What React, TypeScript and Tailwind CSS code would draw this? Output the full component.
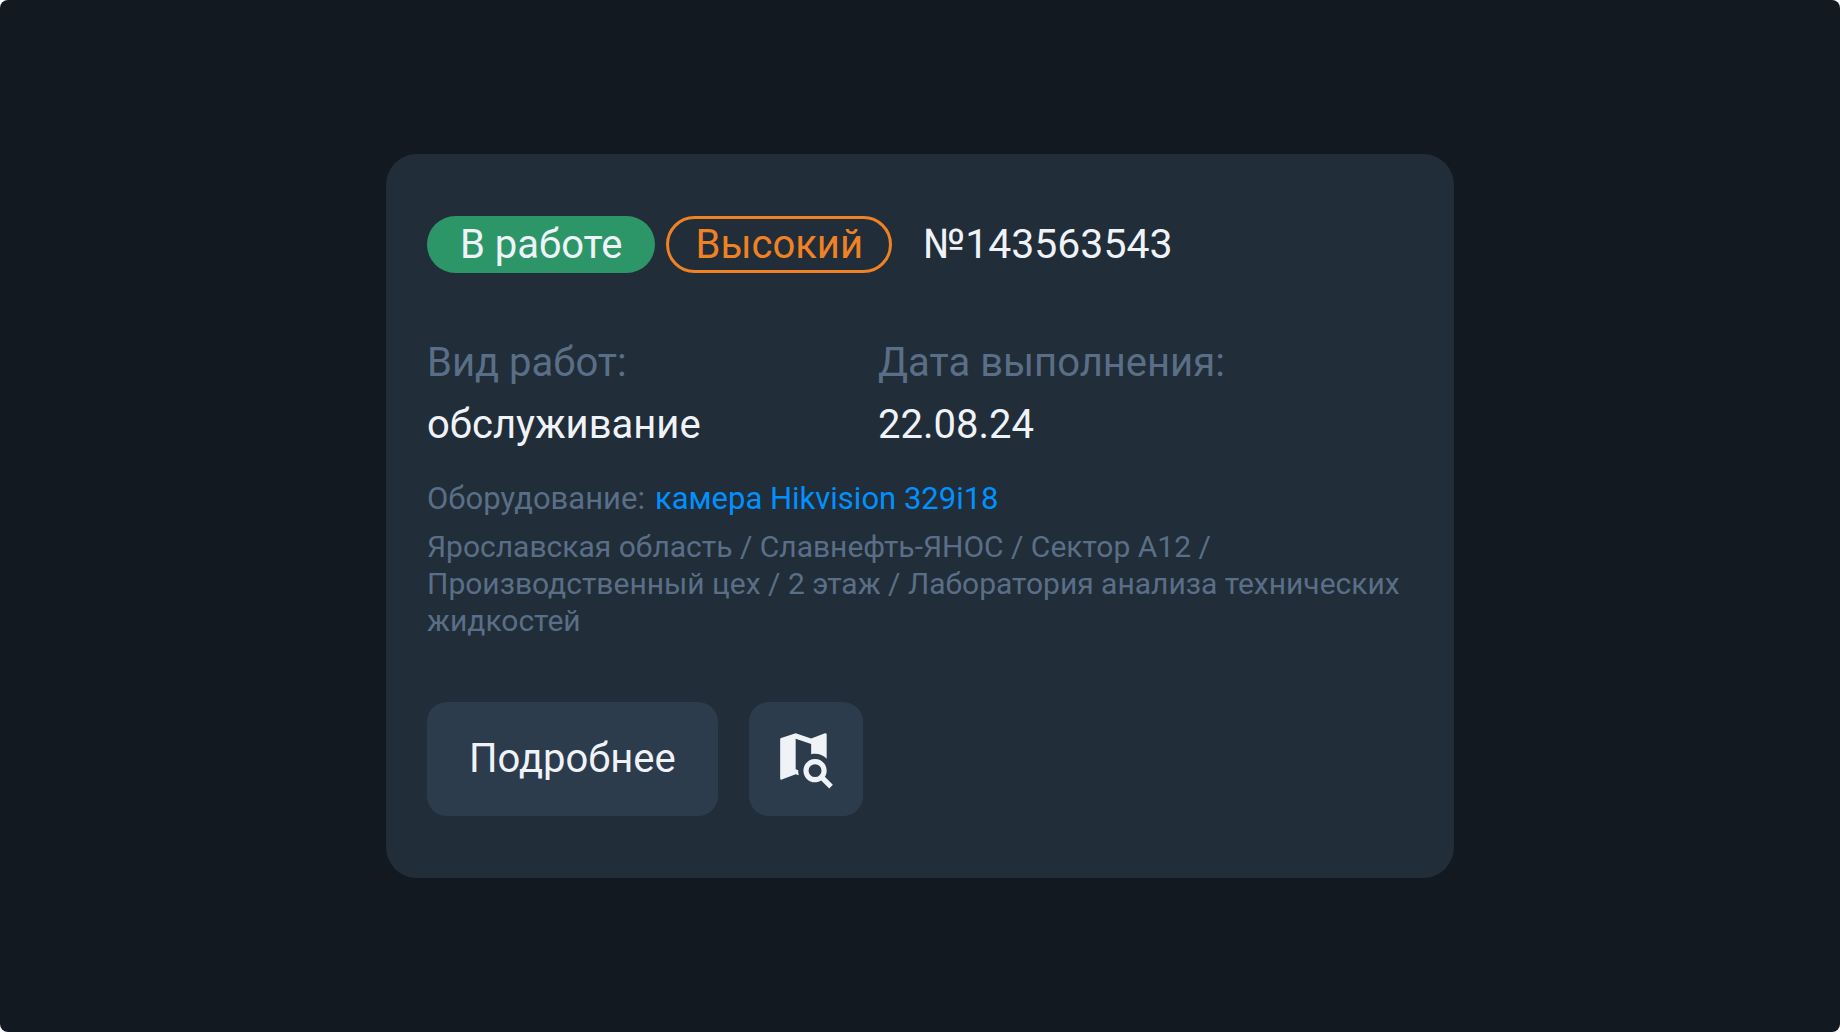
import React from 'react';

function MapSearchIcon() {
  return (
    <svg viewBox="0 0 24 24" className="size-[62px]" fill="currentColor" aria-hidden="true">
      <path d="M19.5 2l-.16.03L14 4.1 8 2 2.36 3.9C2.15 3.97 2 4.15 2 4.38V19.5a.5.5 0 0 0 .5.5l.16-.03L8 17.9l1.2.43A6.6 6.6 0 0 1 9 16.35l-1-.35V4.13l6 2.1v3.94c.5-.11 1-.17 1.5-.17 1.67 0 3.25.69 4.5 1.86V2.5a.5.5 0 0 0-.5-.5z" />
      <path
        fillRule="evenodd"
        d="M15.5 12c2.5 0 4.5 2 4.5 4.5 0 .88-.25 1.71-.69 2.4L22.39 22 21 23.39l-3.12-3.07c-.69.43-1.51.68-2.38.68-2.5 0-4.5-2-4.5-4.5s2-4.5 4.5-4.5zm0 2a2.5 2.5 0 1 0 0 5 2.5 2.5 0 0 0 0-5z"
      />
    </svg>
  );
}

function Field({ label, value }: { label: string; value: string }) {
  return (
    <div>
      <dt className="text-[#5a6f87]">{label}</dt>
      <dd>{value}</dd>
    </div>
  );
}

export default function App() {
  return (
    <div className="bg-white">
      <main className="flex min-h-screen items-center justify-center rounded-lg bg-[#131920] font-['Roboto',sans-serif] text-[40px] text-[#eff3f8]">
        <article className="w-full max-w-[1068px] rounded-[31px] bg-[#212d38] px-[41px] py-[62px]">
          <header className="flex flex-wrap items-center gap-[11px] leading-[57px]">
            <span className="rounded-full bg-[#2d9669] px-[33px]">В работе</span>
            <span className="rounded-full border-[3px] border-[#f08224] px-[26px] leading-[51px] text-[#f08224]">
              Высокий
            </span>
            <h1 className="pl-5 text-[41px]">№143563543</h1>
          </header>

          <dl className="mt-[59px] grid grid-cols-[451fr_535fr] leading-[62px]">
            <Field label="Вид работ:" value="обслуживание" />
            <Field label="Дата выполнения:" value="22.08.24" />
          </dl>

          <p className="mt-[19px] flex flex-wrap gap-[10px] text-[31px] leading-[48px] text-[#5a6f87]">
            Оборудование:
            <a href="#camera" className="text-[#0091ff]">
              камера Hikvision 329i18
            </a>
          </p>
          <p className="mt-[5px] text-[30px] leading-[37px] text-[#5a6f87]">
            Ярославская область / Славнефть-ЯНОС / Сектор А12 / Производственный цех / 2 этаж / Лаборатория анализа
            технических жидкостей
          </p>

          <div className="mt-[63px] flex gap-[31px]">
            <button type="button" className="h-[114px] rounded-[20px] bg-[#2d3c4d] px-[42px]">
              Подробнее
            </button>
            <button
              type="button"
              aria-label="Показать на карте"
              className="flex size-[114px] items-center justify-center rounded-[20px] bg-[#2d3c4d]"
            >
              <MapSearchIcon />
            </button>
          </div>
        </article>
      </main>
    </div>
  );
}
